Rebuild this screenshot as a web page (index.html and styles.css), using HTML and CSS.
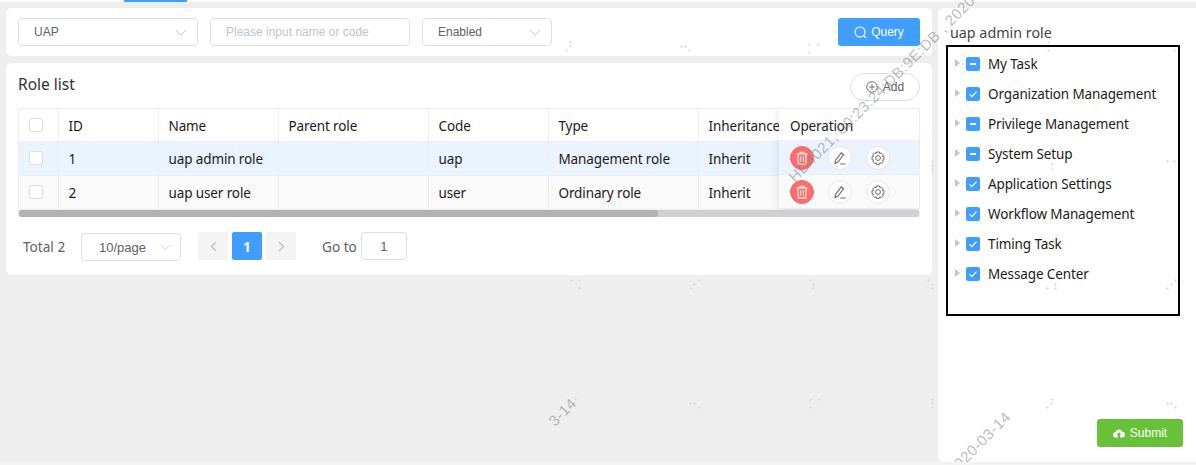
FILE: index.html
```html
<!DOCTYPE html>
<html>

<head>
  <meta charset="utf-8">
  <title>Role list</title>
  <link rel="stylesheet" href="styles.css">
</head>

<body>

  <!-- icons used more than once -->
  <svg class="defs">
    <symbol id="i-down" viewBox="0 0 14 8"><path d="M1 1l6 6 6-6" fill="none" stroke="currentColor" stroke-width="1" /></symbol>
    <symbol id="i-check" viewBox="0 0 14 14"><path d="M3.5 7.2l2.4 2.4 4.6-5" fill="none" stroke="#fff" stroke-width="1.2" /></symbol>
    <symbol id="i-dash" viewBox="0 0 14 14"><rect x="4" y="6" width="6" height="2" fill="#fff" /></symbol>
    <symbol id="i-trash" viewBox="0 0 14 14">
      <path d="M1.5 3h11M5 3V1.300h4V3M3 3l.3 10h7.400L11 3M5.600 5.200v5.600M8.400 5.200v5.600" fill="none" stroke="currentColor" stroke-width="1.300" />
    </symbol>
    <symbol id="i-edit" viewBox="0 0 14 14">
      <path d="M2 12.600l.6-3.400 5.700-7.400 2.400 1.900-5.700 7.400zM7.300 13h5.500" fill="none" stroke="currentColor" stroke-width="1.100" />
    </symbol>
    <symbol id="i-gear" viewBox="0 0 14 14">
      <path d="M5.600 1h2.800l.4 1.600 1.500-.7 1.900 2-.8 1.500 1.600.4v1.400l0 1.400-1.600.4.8 1.500-1.900 2-1.500-.7-.4 1.600H5.600l-.4-1.600-1.500.7-1.900-2 .8-1.500-1.600-.4V5.800l1.600-.4-.8-1.500 1.900-2 1.500.7z" fill="none" stroke="currentColor" stroke-width="1" stroke-linejoin="round" />
      <circle cx="7" cy="7" r="2.400" fill="none" stroke="currentColor" stroke-width="1" />
    </symbol>
    <symbol id="i-plus" viewBox="0 0 3 3"><path d="M1.500 0v3M0 1.500h3" stroke="#d9d9d9" stroke-width=".7" /></symbol>
  </svg>

  <div class="top-strip"><span class="top-tab"></span></div>

  <div class="main">
    <div class="left-col">

      <div class="card filter-bar">
        <div class="field select-uap"><span>UAP</span><svg class="arrow"><use href="#i-down" /></svg></div>
        <div class="field input-name"><span class="placeholder">Please input name or code</span></div>
        <div class="field select-status"><span>Enabled</span><svg class="arrow"><use href="#i-down" /></svg></div>
        <button class="btn-query">
          <svg width="13" height="13" viewBox="0 0 13 13"><circle cx="6" cy="6" r="5" fill="none" stroke="#fff" stroke-width="1.100" /><path d="M9.500 9.500l2.700 2.700" stroke="#fff" stroke-width="1.100" /></svg>
          Query
        </button>
      </div>

      <div class="card list-card">
        <div class="list-head">
          <span class="list-title">Role list</span>
          <button class="btn-add">
            <svg width="12" height="12" viewBox="0 0 12 12"><circle cx="6" cy="6" r="5.300" fill="none" stroke="#606266" stroke-width=".9" /><path d="M6 3.200v5.600M3.200 6h5.600" stroke="#606266" stroke-width=".9" /></svg>
            Add
          </button>
        </div>

        <div class="table-wrap">
          <table class="role-table">
            <colgroup>
              <col class="c-check"><col class="c-id"><col class="c-name"><col class="c-parent">
              <col class="c-code"><col class="c-type"><col class="c-inherit"><col class="c-op">
            </colgroup>
            <tr class="row-head">
              <td class="cell-check"><span class="check"></span></td>
              <td>ID</td><td>Name</td><td>Parent role</td><td>Code</td><td>Type</td><td>Inheritance</td><td></td>
            </tr>
            <tr class="row-active">
              <td class="cell-check"><span class="check"></span></td>
              <td>1</td><td>uap admin role</td><td></td><td>uap</td><td>Management role</td><td>Inherit</td><td></td>
            </tr>
            <tr class="row-alt">
              <td class="cell-check"><span class="check"></span></td>
              <td>2</td><td>uap user role</td><td></td><td>user</td><td>Ordinary role</td><td>Inherit</td><td></td>
            </tr>
          </table>

          <!-- fixed column lies over the scrolling table -->
          <div class="fixed-op">
            <div class="op-cell op-head">Operation</div>
            <div class="op-cell row-active">
              <span class="op-btn op-del"><svg width="14" height="14"><use href="#i-trash" /></svg></span>
              <span class="op-btn"><svg width="14" height="14"><use href="#i-edit" /></svg></span>
              <span class="op-btn"><svg width="14" height="14"><use href="#i-gear" /></svg></span>
            </div>
            <div class="op-cell row-alt">
              <span class="op-btn op-del"><svg width="14" height="14"><use href="#i-trash" /></svg></span>
              <span class="op-btn"><svg width="14" height="14"><use href="#i-edit" /></svg></span>
              <span class="op-btn"><svg width="14" height="14"><use href="#i-gear" /></svg></span>
            </div>
          </div>

          <div class="scroll-track"><div class="scroll-thumb"></div></div>
        </div>

        <div class="pager">
          <span class="pager-total">Total 2</span>
          <div class="field pager-size"><span>10/page</span><svg class="arrow small"><use href="#i-down" /></svg></div>
          <span class="page-btn">
            <svg width="7" height="11" viewBox="0 0 7 11"><path d="M6 1L1.500 5.500 6 10" fill="none" stroke="#c0c4cc" stroke-width="1.500" /></svg>
          </span>
          <span class="page-btn page-on">1</span>
          <span class="page-btn">
            <svg width="7" height="11" viewBox="0 0 7 11"><path d="M1 1l4.500 4.500L1 10" fill="none" stroke="#c0c4cc" stroke-width="1.500" /></svg>
          </span>
          <span class="pager-goto">Go to</span>
          <div class="field pager-input">1</div>
        </div>
      </div>
    </div>

    <div class="card side-panel">
      <div class="side-title">uap admin role</div>
      <div class="tree">
        <div class="tree-row"><i class="caret"></i><span class="tree-check"><svg width="14" height="14"><use href="#i-dash" /></svg></span><span class="tree-label">My Task</span></div>
        <div class="tree-row"><i class="caret"></i><span class="tree-check"><svg width="14" height="14"><use href="#i-check" /></svg></span><span class="tree-label">Organization Management</span></div>
        <div class="tree-row"><i class="caret"></i><span class="tree-check"><svg width="14" height="14"><use href="#i-dash" /></svg></span><span class="tree-label">Privilege Management</span></div>
        <div class="tree-row"><i class="caret"></i><span class="tree-check"><svg width="14" height="14"><use href="#i-dash" /></svg></span><span class="tree-label">System Setup</span></div>
        <div class="tree-row"><i class="caret"></i><span class="tree-check"><svg width="14" height="14"><use href="#i-check" /></svg></span><span class="tree-label">Application Settings</span></div>
        <div class="tree-row"><i class="caret"></i><span class="tree-check"><svg width="14" height="14"><use href="#i-check" /></svg></span><span class="tree-label">Workflow Management</span></div>
        <div class="tree-row"><i class="caret"></i><span class="tree-check"><svg width="14" height="14"><use href="#i-check" /></svg></span><span class="tree-label">Timing Task</span></div>
        <div class="tree-row"><i class="caret"></i><span class="tree-check"><svg width="14" height="14"><use href="#i-check" /></svg></span><span class="tree-label">Message Center</span></div>
      </div>
      <div class="side-foot">
        <button class="btn-submit">
          <svg width="12" height="10" viewBox="0 0 12 10"><path d="M3 9.500a2.700 2.700 0 0 1-.4-5.400A3.500 3.500 0 0 1 9.300 3.700 2.900 2.900 0 0 1 9.200 9.500H7V6.800h1.500L6 4.200 3.500 6.800H5v2.700z" fill="#fff" /></svg>
          Submit
        </button>
      </div>
    </div>
  </div>

  <div class="bottom-strip"></div>

  <!-- watermark over the whole page -->
  <div class="wm-layer">
    <svg class="wm-dots" width="1196" height="465">
      <use href="#i-plus" x="565" y="49" width="3" height="3" /><use href="#i-plus" x="569" y="45" width="3" height="3" /><use href="#i-plus" x="569" y="41" width="3" height="3" />
      <use href="#i-plus" x="680" y="45" width="3" height="3" /><use href="#i-plus" x="684" y="45" width="3" height="3" /><use href="#i-plus" x="688" y="49" width="3" height="3" />
      <use href="#i-plus" x="808" y="43" width="3" height="3" /><use href="#i-plus" x="817" y="43" width="3" height="3" /><use href="#i-plus" x="808" y="51" width="3" height="3" />
      <use href="#i-plus" x="1047" y="41" width="3" height="3" /><use href="#i-plus" x="1047" y="49" width="3" height="3" /><use href="#i-plus" x="1173" y="49" width="3" height="3" />
      <use href="#i-plus" x="1051" y="163" width="3" height="3" /><use href="#i-plus" x="1051" y="168" width="3" height="3" /><use href="#i-plus" x="1166" y="160" width="3" height="3" /><use href="#i-plus" x="1173" y="160" width="3" height="3" />
      <use href="#i-plus" x="931" y="160" width="3" height="3" /><use href="#i-plus" x="931" y="164" width="3" height="3" /><use href="#i-plus" x="931" y="168" width="3" height="3" />
      <use href="#i-plus" x="570" y="279" width="3" height="3" /><use href="#i-plus" x="578" y="279" width="3" height="3" /><use href="#i-plus" x="578" y="287" width="3" height="3" />
      <use href="#i-plus" x="689" y="287" width="3" height="3" /><use href="#i-plus" x="693" y="283" width="3" height="3" /><use href="#i-plus" x="697" y="279" width="3" height="3" />
      <use href="#i-plus" x="809" y="279" width="3" height="3" /><use href="#i-plus" x="812" y="283" width="3" height="3" /><use href="#i-plus" x="812" y="287" width="3" height="3" />
      <use href="#i-plus" x="927" y="279" width="3" height="3" /><use href="#i-plus" x="931" y="283" width="3" height="3" /><use href="#i-plus" x="931" y="287" width="3" height="3" />
      <use href="#i-plus" x="1046" y="287" width="3" height="3" /><use href="#i-plus" x="1054" y="287" width="3" height="3" /><use href="#i-plus" x="1054" y="283" width="3" height="3" />
      <use href="#i-plus" x="1166" y="287" width="3" height="3" /><use href="#i-plus" x="1170" y="283" width="3" height="3" /><use href="#i-plus" x="1174" y="279" width="3" height="3" />
      <use href="#i-plus" x="574" y="398" width="3" height="3" /><use href="#i-plus" x="570" y="406" width="3" height="3" />
      <use href="#i-plus" x="689" y="402" width="3" height="3" /><use href="#i-plus" x="693" y="402" width="3" height="3" /><use href="#i-plus" x="697" y="406" width="3" height="3" />
      <use href="#i-plus" x="809" y="398" width="3" height="3" /><use href="#i-plus" x="817" y="398" width="3" height="3" /><use href="#i-plus" x="809" y="406" width="3" height="3" />
      <use href="#i-plus" x="931" y="398" width="3" height="3" /><use href="#i-plus" x="931" y="402" width="3" height="3" /><use href="#i-plus" x="931" y="406" width="3" height="3" />
      <use href="#i-plus" x="1046" y="406" width="3" height="3" /><use href="#i-plus" x="1050" y="398" width="3" height="3" /><use href="#i-plus" x="1050" y="402" width="3" height="3" />
      <use href="#i-plus" x="1166" y="402" width="3" height="3" /><use href="#i-plus" x="1170" y="402" width="3" height="3" /><use href="#i-plus" x="1174" y="406" width="3" height="3" />
    </svg>
    <span class="wm wm-a">HD4021, 00:23:24:DB:9E:DB , 2020-03-14</span>
    <span class="wm wm-b">2020-03-14</span>
    <span class="wm wm-c">3-14</span>
  </div>

</body>

</html>
```

FILE: styles.css
```css
* {
  box-sizing: border-box;
}

html,
body {
  margin: 0;
  height: 465px;
  overflow: hidden;
}

body {
  background-color: #eeeeee;
  font-family: "Noto Sans", "Liberation Sans", sans-serif;
  font-size: 13.5px;
  letter-spacing: -0.12px;
  color: #1a1a1a;
  position: relative;
}

.defs {
  display: none;
}

.top-strip {
  height: 2px;
  background-color: #fafafa;
  padding-left: 124px;
}

.top-tab {
  display: block;
  width: 63px;
  height: 2px;
  background-color: #409eff;
}

.main {
  display: flex;
  gap: 6px;
  height: 460px;
  padding: 6px 0 0 6px;
}

.left-col {
  width: 926px;
  display: flex;
  flex-direction: column;
  gap: 7px;
}

.card {
  background-color: #fff;
  border-radius: 6px;
}

.filter-bar {
  height: 48px;
  padding: 10px 12px;
  display: flex;
  align-items: center;
  gap: 12px;
}

.field {
  height: 28px;
  border: 1px solid #dcdfe6;
  border-radius: 4px;
  display: flex;
  align-items: center;
  justify-content: space-between;
  padding: 0 10px 0 15px;
  font-family: "Liberation Sans", sans-serif;
  font-size: 12px;
  letter-spacing: 0;
  color: #606266;
  background-color: #fff;
}

.select-uap {
  width: 180px;
}

.input-name {
  width: 200px;
}

.select-status {
  width: 130px;
}

.placeholder {
  color: #c0c4cc;
}

.arrow {
  width: 12px;
  height: 7px;
  color: #b4bccc;
}

.arrow.small {
  width: 9px;
  height: 5px;
}

.btn-query {
  margin-left: auto;
  width: 82px;
  height: 28px;
  border: 0;
  border-radius: 3px;
  background-color: #409eff;
  color: #fff;
  font-family: "Liberation Sans", sans-serif;
  font-size: 12px;
  display: flex;
  align-items: center;
  justify-content: center;
  gap: 4px;
  padding: 0;
}

.list-card {
  height: 212px;
  padding: 10px 12px 0;
}

.list-head {
  height: 35px;
  display: flex;
  justify-content: space-between;
  align-items: flex-start;
}

.list-title {
  font-size: 15.5px;
  letter-spacing: 0;
  line-height: 23px;
  color: #303133;
}

.btn-add {
  width: 70px;
  height: 28px;
  border: 1px solid #dcdfe6;
  border-radius: 14px;
  background-color: #fff;
  color: #606266;
  font-family: "Liberation Sans", sans-serif;
  font-size: 12px;
  display: flex;
  align-items: center;
  justify-content: center;
  gap: 5px;
  padding: 0;
}

.table-wrap {
  position: relative;
  width: 902px;
  height: 109px;
  overflow: hidden;
  border: 1px solid #ebeef5;
  border-bottom: 0;
}

.role-table {
  table-layout: fixed;
  width: 1270px;
  border-collapse: collapse;
}

.c-check {
  width: 39px;
}

.c-id {
  width: 100px;
}

.c-name {
  width: 120px;
}

.c-parent {
  width: 150px;
}

.c-code {
  width: 120px;
}

.c-type {
  width: 150px;
}

.c-inherit {
  width: 150px;
}

.role-table td {
  height: 34px;
  padding: 2px 10px 0;
  border-right: 1px solid #ebeef5;
  border-bottom: 1px solid #ebeef5;
  white-space: nowrap;
}

.role-table .row-head td {
  height: 32px;
}

.role-table td.cell-check {
  padding: 0 0 0 10px;
}

.check {
  display: block;
  width: 14px;
  height: 14px;
  border: 1px solid #dcdfe6;
  border-radius: 2px;
  background-color: #fff;
}

.row-active {
  background-color: #ebf3fe;
}

.row-alt {
  background-color: #fafafa;
}

.fixed-op {
  position: absolute;
  top: 0;
  right: 0;
  width: 140px;
  box-shadow: 0 0 10px rgba(0, 0, 0, 0.12);
  background-color: #fff;
}

.op-cell {
  height: 34px;
  padding-left: 11px;
  display: flex;
  align-items: center;
  gap: 14px;
  border-bottom: 1px solid #ebeef5;
}

.op-head {
  height: 32px;
  padding-top: 2px;
}

.op-btn {
  width: 24px;
  height: 24px;
  border: 1px solid #e4e7ed;
  border-radius: 50%;
  background-color: #fff;
  color: #6b6b6b;
  display: flex;
  align-items: center;
  justify-content: center;
}

.op-del {
  border-color: #f56c6c;
  background-color: #f76e6e;
  color: #fcd9d9;
}

.scroll-track {
  position: absolute;
  left: 0;
  right: 0;
  bottom: 0;
  height: 7px;
  background-color: #d0d0d0;
  border-radius: 2px;
}

.scroll-thumb {
  width: 639px;
  height: 7px;
  background-color: #b2b2b2;
  border-radius: 3px;
}

.pager {
  display: flex;
  align-items: center;
  margin-top: 15px;
  height: 28px;
  padding-left: 5px;
  font-size: 13.6px;
  letter-spacing: 0;
  color: #606266;
}

.pager-total {
  width: 58px;
}

.pager-size {
  width: 100px;
  margin-top: 2px;
  padding: 0 10px 0 17px;
  font-size: 13px;
  margin-right: 17px;
}

.page-btn {
  width: 30px;
  height: 28px;
  margin-right: 4px;
  border-radius: 2px;
  background-color: #f4f4f5;
  display: flex;
  align-items: center;
  justify-content: center;
}

.page-on {
  background-color: #409eff;
  color: #fff;
  font-weight: 700;
}

.pager-goto {
  margin-left: 22px;
  margin-right: 4px;
}

.pager-input {
  width: 46px;
  padding: 0;
  justify-content: center;
  font-size: 13px;
}

.side-panel {
  width: 258px;
  height: 454px;
  border-radius: 6px 0 0 6px;
  padding: 14px 8px 0;
  display: flex;
  flex-direction: column;
}

.side-title {
  padding-left: 4px;
  font-size: 14.3px;
  letter-spacing: 0;
  line-height: 22px;
  color: #444;
}

.tree {
  margin-top: 1px;
  width: 234px;
  height: 271px;
  border: 2px solid #000;
  padding: 2px 0 0 7px;
}

.tree-row {
  height: 30px;
  display: flex;
  align-items: center;
}

.tree-label {
  margin-top: -1px;
}

.caret {
  width: 0;
  height: 0;
  border-left: 5px solid #c0c4cc;
  border-top: 4px solid transparent;
  border-bottom: 4px solid transparent;
  margin-right: 6px;
  margin-top: -3px;
}

.tree-check {
  width: 14px;
  height: 14px;
  border-radius: 2px;
  background-color: #409eff;
  margin-right: 8px;
}

.tree-check svg {
  display: block;
}

.side-foot {
  margin-top: auto;
  padding: 0 5px 15px 0;
  display: flex;
  justify-content: flex-end;
}

.btn-submit {
  width: 86px;
  height: 28px;
  border: 0;
  border-radius: 3px;
  background-color: #67c23a;
  color: #fff;
  font-family: "Liberation Sans", sans-serif;
  font-size: 12px;
  display: flex;
  align-items: center;
  justify-content: center;
  gap: 5px;
  padding: 0;
}

.bottom-strip {
  height: 3px;
  background-color: #f3f3f3;
}

.wm-layer {
  position: absolute;
  left: 0;
  top: 0;
  width: 1196px;
  height: 462px;
  overflow: hidden;
  pointer-events: none;
}

.wm-dots {
  position: absolute;
  left: 0;
  top: 0;
}

.wm {
  position: absolute;
  font-family: "Liberation Sans", sans-serif;
  font-size: 15px;
  letter-spacing: 0.5px;
  color: rgba(130, 130, 130, 0.55);
  white-space: nowrap;
  transform-origin: 0 100%;
  transform: rotate(-45deg);
}

.wm-a {
  left: 797px;
  top: 168px;
}

.wm-b {
  left: 956px;
  top: 461px;
}

.wm-c {
  left: 557px;
  top: 412px;
}
```
